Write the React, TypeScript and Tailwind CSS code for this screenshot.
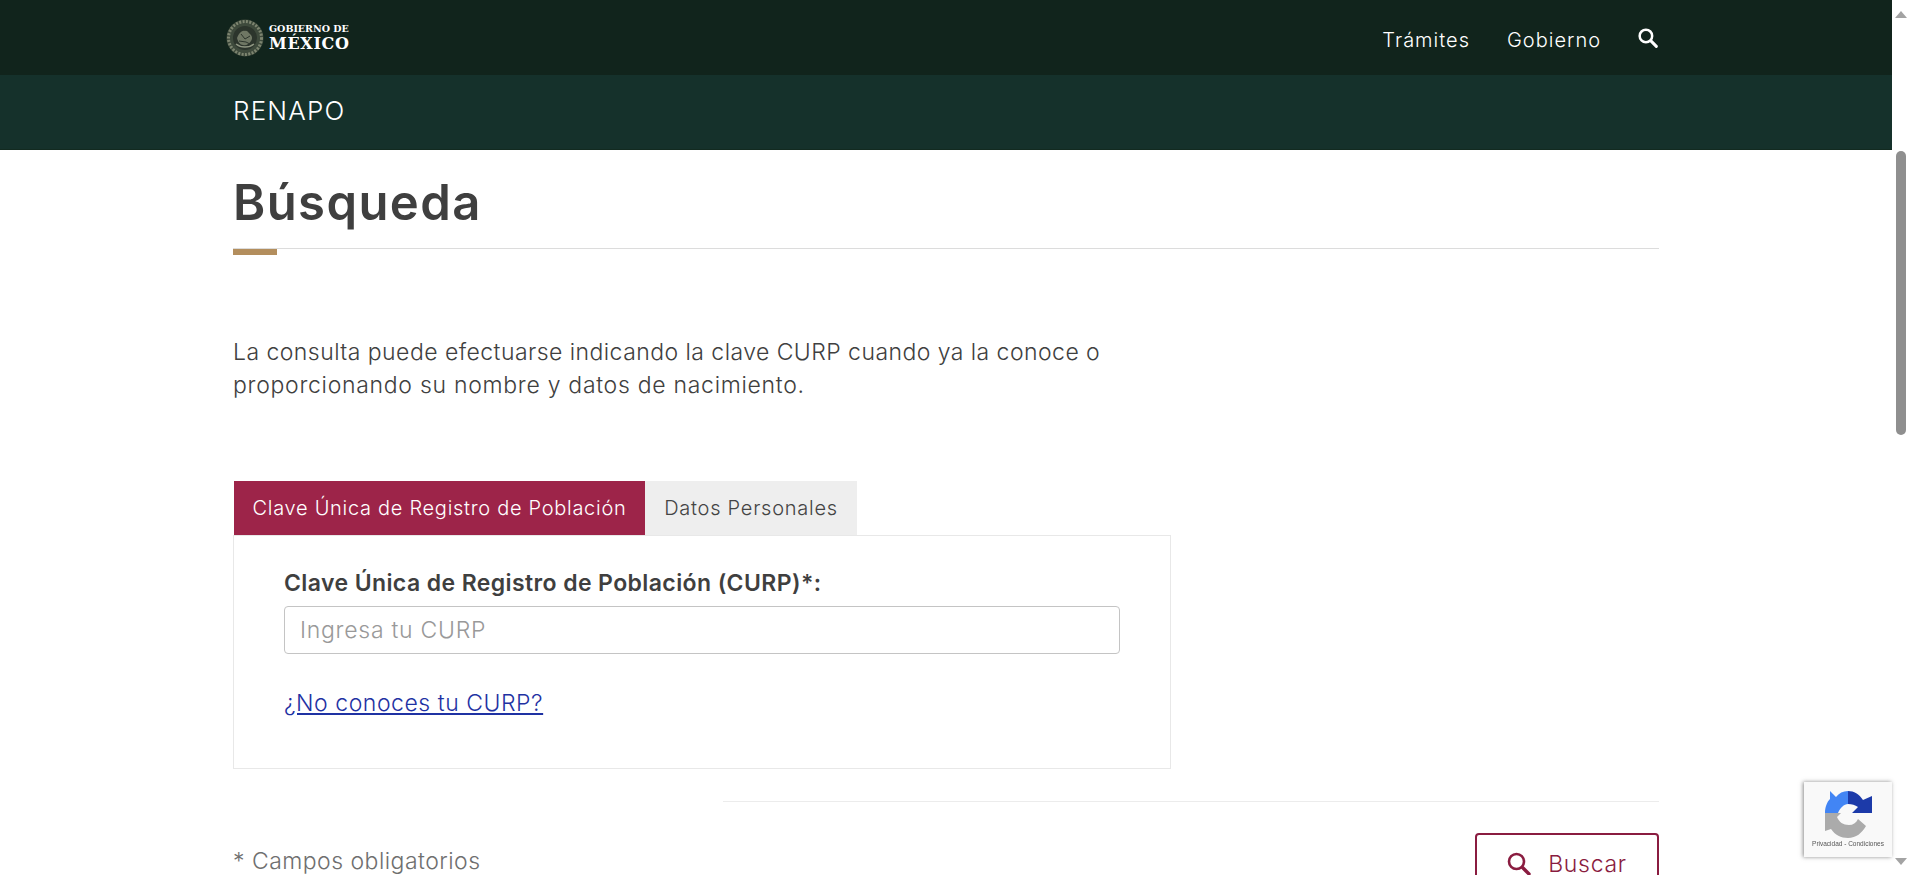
const sans = "font-['Inter','Liberation_Sans',sans-serif]";

function SearchIcon({ size, thick, handle }: { size: number; thick: number; handle: number }) {
  return (
    <svg width={size} height={size} viewBox="0 0 24 24" fill="none" stroke="currentColor">
      <circle cx="9.5" cy="9.5" r="7.5" strokeWidth={thick} />
      <path d="M15.5 15.5L22 22" strokeWidth={handle} strokeLinecap="round" />
    </svg>
  );
}

function Logo() {
  return (
    <div className="flex items-center gap-[5px]">
      <svg width="38" height="38" viewBox="0 0 38 38">
        <circle cx="19" cy="19" r="18.5" fill="#3e4a3c" />
        <circle cx="19" cy="19" r="16.5" fill="none" stroke="#7d8570" strokeWidth="3" strokeDasharray="2 1.4" />
        <circle cx="19" cy="19" r="12" fill="#2c352c" />
        <path d="M11 19c2-5 5-8 8-7 3-1 3 2 5 3 2 2 3 4 1 7-2 3-5 5-8 4-3 0-5-3-6-7z" fill="#6f7764" />
        <path d="M15 15l4 5 5-3M13 22l7 1 4 2" fill="none" stroke="#2c352c" strokeWidth="1" />
        <path d="M10 25c5 4 13 4 18 0" fill="none" stroke="#8f9682" strokeWidth="1.6" />
      </svg>
      <div className="flex flex-col font-['DejaVu_Serif',serif] font-bold text-white leading-none">
        <span className="text-[9.5px] leading-[11px] whitespace-nowrap">GOBIERNO DE</span>
        <span className="text-[16px] leading-[19px] tracking-[0.7px] whitespace-nowrap">MÉXICO</span>
      </div>
    </div>
  );
}

function Recaptcha() {
  return (
    <div className="fixed left-[1804px] top-[782px] w-[88px] h-[75px] bg-[#f9f9f9] shadow-[-1px_0_4px_rgba(110,110,110,0.8)] flex flex-col items-center pt-[9px]">
      <svg width="47" height="47" viewBox="0 0 47 47">
        <path d="M0 22H16L12 26C14 31 18 34 24 34C28 34 31 32 33 28L41 35C37 42 31 47 23 47C16 47 10 44 6 38L0 40Z" fill="#ababab" />
        <path d="M5 0L11 6C14 2 18 0 23 0V13C19 13 15 17 13 22H0C0 16 2 11 5 8Z" fill="#4285f4" />
        <path d="M23 0C29 0 34 3 38 9L47 5V22H27L33 16C30 14 27 13 23 13Z" fill="#1c3aa9" />
      </svg>
      <span className="font-['Liberation_Sans',sans-serif] text-[6.5px] text-[#555] mt-[3px] whitespace-nowrap leading-none">Privacidad - Condiciones</span>
    </div>
  );
}

function ScrollBar() {
  return (
    <div className="w-[18px] h-full bg-white flex flex-col items-center shrink-0">
      <div className="h-[151px] w-full flex justify-center pt-[11px]">
        <div className="w-0 h-0 border-x-[6px] border-x-transparent border-b-[7px] border-b-[#a3a3a3]" />
      </div>
      <div className="w-[10px] h-[284px] rounded-[5px] bg-[#8f8f8f]" />
      <div className="flex-1" />
      <div className="w-0 h-0 border-x-[6px] border-x-transparent border-t-[7px] border-t-[#a3a3a3] mb-[10px]" />
    </div>
  );
}

export default function App() {
  return (
    <div className={`${sans} w-[1910px] h-[875px] overflow-hidden flex bg-white`}>
      <div className="w-[1892px] h-full flex flex-col">
        <header className="h-[75px] bg-[#11241c] shrink-0">
          <div className="w-[1432px] h-full ml-[226px] flex items-center justify-between">
            <Logo />
            <nav className="flex items-center gap-[37px] text-white text-[20px] font-[350] tracking-[1px]">
              <span className="mt-[5px]">Trámites</span>
              <span className="mt-[5px]">Gobierno</span>
              <SearchIcon size={20} thick={3} handle={3.6} />
            </nav>
          </div>
        </header>
        <div className="h-[75px] bg-[#15312b] shrink-0 border-b border-[#122a20] flex items-center">
          <div className="ml-[233px] mb-[3px] text-white text-[26px] font-[350] tracking-[1.2px]">RENAPO</div>
        </div>
        <main className="w-[1426px] ml-[233px] flex flex-col">
          <h1 className="mt-[24px] text-[49px] leading-[58px] font-semibold text-[#3f3f3f] tracking-[1.4px]">Búsqueda</h1>
          <div className="mt-[16px] h-[7px] relative">
            <div className="h-[1px] bg-[#dcdcdc]" />
            <div className="absolute left-0 top-[1px] w-[44px] h-[6px] bg-[#b38e5d]" />
          </div>
          <p className="mt-[81px] text-[23px] leading-[33px] font-[350] text-[#404040]">
            <span className="block tracking-[0.45px]">La consulta puede efectuarse indicando la clave CURP cuando ya la conoce o</span>
            <span className="block tracking-[0.71px]">proporcionando su nombre y datos de nacimiento.</span>
          </p>
          <div className="mt-[79px] w-[938px] flex flex-col">
            <div className="flex h-[54px] pl-[1px]">
              <div className="w-[411px] bg-[#9d2449] text-white text-[20px] font-[350] tracking-[0.71px] flex items-center justify-center">Clave Única de Registro de Población</div>
              <div className="w-[212px] bg-[#eeeeee] text-[#444] text-[20px] font-[350] tracking-[0.75px] flex items-center justify-center">Datos Personales</div>
            </div>
            <div className="h-[234px] border border-[#e8e8e8] px-[50px] flex flex-col">
              <label className="mt-[32px] text-[23px] leading-[30px] font-semibold tracking-[0.4px] text-[#3f3f3f]">Clave Única de Registro de Población (CURP)*:</label>
              <input
                placeholder="Ingresa tu CURP"
                className="mt-[8px] h-[48px] border border-[#c4c4c4] rounded-[4px] px-[15px] text-[23px] font-[350] tracking-[0.73px] placeholder:text-[#999] outline-none"
              />
              <a className="mt-[33px] text-[23px] leading-[32px] font-[350] tracking-[0.54px] text-[#1f32a3] underline">¿No conoces tu CURP?</a>
            </div>
          </div>
          <div className="mt-[32px] ml-[490px] h-[1px] bg-[#ececec]" />
          <div className="mt-[31px] flex justify-between">
            <span className="mt-[15px] text-[23px] leading-[27px] font-light tracking-[0.47px] text-[#6f6f6f]">* Campos obligatorios</span>
            <button className="w-[184px] h-[62px] border-2 border-[#8a1c40] rounded-[4px] text-[#8a1c40] text-[23px] leading-[22px] font-[350] tracking-[0.7px] flex items-center justify-center gap-[17px]">
              <SearchIcon size={24} thick={2.6} handle={3.4} />
              Buscar
            </button>
          </div>
        </main>
      </div>
      <ScrollBar />
      <Recaptcha />
    </div>
  );
}
